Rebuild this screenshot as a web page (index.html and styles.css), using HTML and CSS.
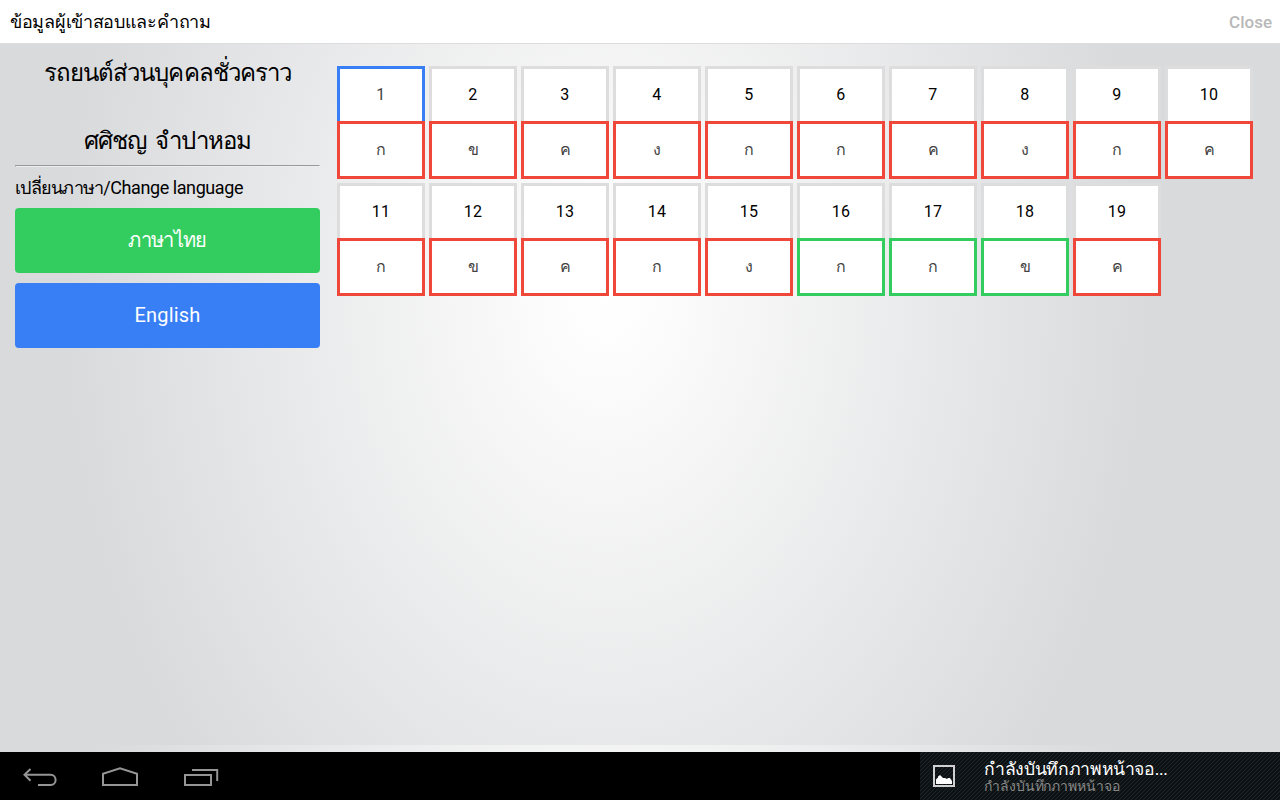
FILE: index.html
```
<!DOCTYPE html>
<html lang="th">
<head>
<meta charset="utf-8">
<title>ข้อมูลผู้เข้าสอบและคำถาม</title>
<link rel="stylesheet" href="styles.css">
</head>
<body>
<header class="topbar"><h1 class="topbar-title">ข้อมูลผู้เข้าสอบและคำถาม</h1><button class="close">Close</button></header>
<main class="content">
  <aside class="side">
    <h2 class="license">รถยนต์ส่วนบุคคลชั่วคราว</h2>
    <h2 class="person">ศศิชญ จำปาหอม</h2>
    <hr class="rule">
    <p class="lang-label"><span class="lang-th">เปลี่ยนภาษา</span>/Change language</p>
    <button class="btn green">ภาษาไทย</button>
    <button class="btn blue">English</button>
  </aside>
  <section class="grid">
    <div class="cell wrong current"><b>1</b><i>ก</i></div>
    <div class="cell wrong"><b>2</b><i>ข</i></div>
    <div class="cell wrong"><b>3</b><i>ค</i></div>
    <div class="cell wrong"><b>4</b><i>ง</i></div>
    <div class="cell wrong"><b>5</b><i>ก</i></div>
    <div class="cell wrong"><b>6</b><i>ก</i></div>
    <div class="cell wrong"><b>7</b><i>ค</i></div>
    <div class="cell wrong"><b>8</b><i>ง</i></div>
    <div class="cell wrong"><b>9</b><i>ก</i></div>
    <div class="cell wrong"><b>10</b><i>ค</i></div>
    <div class="cell wrong"><b>11</b><i>ก</i></div>
    <div class="cell wrong"><b>12</b><i>ข</i></div>
    <div class="cell wrong"><b>13</b><i>ค</i></div>
    <div class="cell wrong"><b>14</b><i>ก</i></div>
    <div class="cell wrong"><b>15</b><i>ง</i></div>
    <div class="cell right"><b>16</b><i>ก</i></div>
    <div class="cell right"><b>17</b><i>ก</i></div>
    <div class="cell right"><b>18</b><i>ข</i></div>
    <div class="cell wrong"><b>19</b><i>ค</i></div>
  </section>
</main>
<footer class="sysbar">
  <svg class="nav" width="240" height="48" viewBox="0 0 240 48" fill="none" stroke="#959595" stroke-width="2">
    <path d="M30.500 17L24.500 22.800L30.500 28.800M25 22.800H50.500C57.300 22.800 57.300 33 50.500 33H38"/>
    <path d="M103 33V21.800L120 16.200L137 21.800V33Z"/>
    <path d="M185 23H211V33H185ZM192 18H217.200V29"/>
  </svg>
  <div class="notice">
    <svg width="22" height="22" viewBox="0 0 22 22"><path d="M1 1H21V21H1Z" fill="none" stroke="#d0d0d0" stroke-width="2"/><path d="M3 19V14.500L5 12.500V11.500L7 10L9 12L10 13H12L14 14L15 13H17L19 16V19Z" fill="#fff"/></svg>
    <div class="notice-text"><div class="notice-title">กำลังบันทึกภาพหน้าจอ...</div><div class="notice-sub">กำลังบันทึกภาพหน้าจอ</div></div>
  </div>
</footer>
</body>
</html>
```

FILE: styles.css
```
* { box-sizing: border-box; }
body { margin: 0; width: 1280px; height: 800px; overflow: hidden; display: flex; flex-direction: column; font-family: Roboto, sans-serif; color: #000; }
h1, h2, p { margin: 0; font-weight: 400; }
button { border: 0; font-family: inherit; padding: 0; }
.topbar { height: 44px; flex: none; display: flex; justify-content: space-between; align-items: center; padding: 0 8px 0 10px; background: #fff; border-bottom: 1px solid #ddd; }
.topbar-title { font-size: 18px; line-height: 42px; letter-spacing: -.3px; }
.close { background: none; color: #b8b8b8; font-size: 17px; font-weight: 500; letter-spacing: 0; }
.content { flex: 1; display: flex; background: radial-gradient(ellipse 542px 735px at 606px 248px, #fff 0%, #fdfdfd 8%, #d9dadc 100%) 0 0 / 1280px 701px; }
.side { width: 320px; padding: 11px 0 0 15px; }
.license, .person { font-size: 24px; line-height: 36px; text-align: center; white-space: nowrap; letter-spacing: -.95px; }
.person { margin-top: 32px; word-spacing: 4px; }
.rule { margin: 6px 0 0; height: 2px; border: 1px solid; border-color: #999 #eee #eee #999; }
.lang-label { font-size: 18px; line-height: 24px; margin: 9px 0 8px; white-space: nowrap; letter-spacing: -.42px; }
.lang-th { letter-spacing: -.75px; }
.btn { display: block; width: 305px; height: 65px; border-radius: 4px; color: #fff; font-size: 20px; margin-bottom: 10px; padding-bottom: 2px; letter-spacing: .2px; }
.green { background: #33cd5f; letter-spacing: -.7px; }
.blue { background: #387ef5; }
.grid { display: grid; grid-template-columns: repeat(10, 88px); column-gap: 4px; row-gap: 4px; align-content: start; padding: 22px 0 0 17px; }
.cell b, .cell i { display: flex; align-items: center; justify-content: center; background: #fff; font-weight: 400; font-style: normal; font-size: 16px; padding-bottom: 2px; }
.cell b { height: 55px; border: 3px solid #ddd; border-bottom: 0; letter-spacing: .3px; }
.cell i { height: 58px; border: 3px solid #ef473a; color: #444; }
.cell.right i { border-color: #33cd5f; }
.cell.current b { border-color: #387ef5; color: #444; }
.sysbar { height: 48px; flex: none; display: flex; justify-content: space-between; background: #000; }
.notice { width: 360px; display: flex; align-items: center; gap: 29px; padding-left: 13px; background: repeating-linear-gradient(135deg, #0f1011 0 2px, #17292e 2px 2.828px); }
.notice-text { white-space: nowrap; padding-bottom: 1px; }
.notice-title { color: #fff; font-size: 17.600px; line-height: 22px; letter-spacing: -.35px; }
.notice-sub { color: #888; font-size: 14px; line-height: 13px; letter-spacing: -.1px; }
```
